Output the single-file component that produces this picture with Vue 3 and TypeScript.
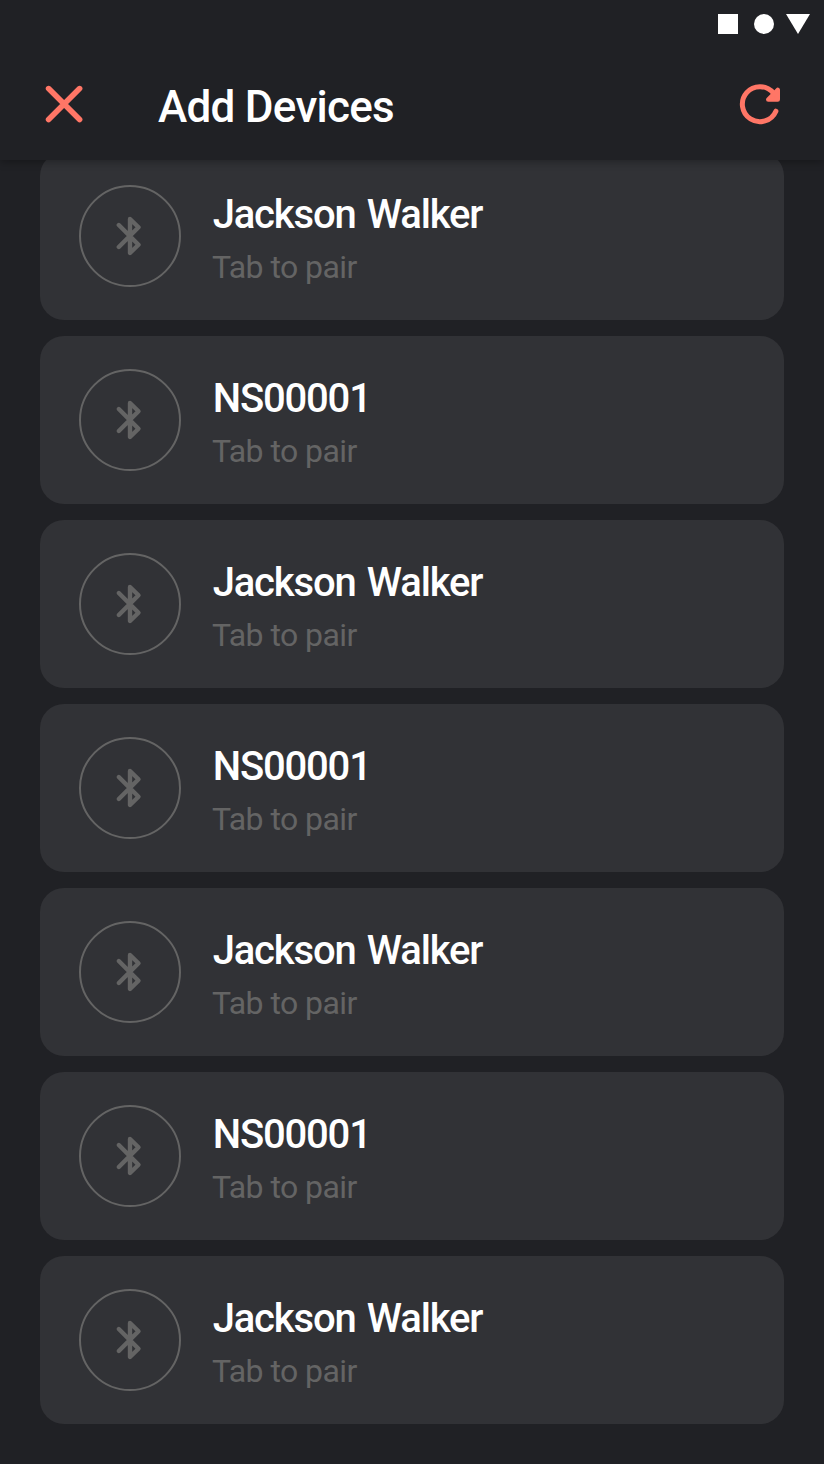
<script setup lang="ts">
interface Device { id: number; name: string; hint: string }
const devices: Device[] = Array.from({ length: 7 }, (_, i) => ({
  id: i,
  name: i % 2 === 0 ? 'Jackson Walker' : 'NS00001',
  hint: 'Tab to pair',
}))
</script>

<template>
  <div class="screen">
    <header class="top">
      <div class="status">
        <svg width="92" height="20" viewBox="0 0 92 20" fill="#fff">
          <rect width="20" height="20" />
          <circle cx="46" cy="10" r="10" />
          <path d="M68 0H92L80 20Z" />
        </svg>
      </div>
      <div class="bar">
        <button class="icon" aria-label="Close">
          <svg width="48" height="48" viewBox="0 0 48 48" fill="none" stroke="#ff7666" stroke-width="5.6" stroke-linecap="round">
            <path d="M8.6 8.6L39.6 39.6M39.6 8.6L8.6 39.6" />
          </svg>
        </button>
        <h1>Add Devices</h1>
        <button class="icon" aria-label="Refresh">
          <svg width="48" height="48" viewBox="0 0 48 48" fill="none" stroke="#ff7666" stroke-width="5" stroke-linecap="round" stroke-linejoin="round">
            <path d="M39.9 31.2A17.5 17.5 0 1 1 37.3 13" />
            <path d="M41.7 10V19.5H32.3Z" fill="#ff7666" stroke-width="4.6" />
          </svg>
        </button>
      </div>
    </header>
    <main class="list">
      <article v-for="d in devices" :key="d.id" class="card">
        <div class="ring">
          <svg width="48" height="48" viewBox="0 0 48 48" fill="none" stroke="#646464" stroke-width="4.4" stroke-linecap="round" stroke-linejoin="round">
            <path d="M12.8 13L32.5 32.7L24 41V7L32.5 15.3L12.8 35" />
          </svg>
        </div>
        <div class="text">
          <div class="name">{{ d.name }}</div>
          <div class="hint">{{ d.hint }}</div>
        </div>
      </article>
    </main>
  </div>
</template>

<style>
body { margin: 0; background: #202125; }
</style>
<style scoped>
.screen { width: 824px; height: 1464px; overflow: hidden; background: #202125; font-family: Roboto, sans-serif; color: #fff; }
.top { position: relative; z-index: 1; height: 160px; background: #202125; box-shadow: 0 2px 8px rgba(0, 0, 0, .3); }
.status { height: 48px; box-sizing: border-box; padding: 14px 14px 0 0; display: flex; justify-content: flex-end; }
.bar { height: 112px; box-sizing: border-box; padding: 0 40px; display: flex; align-items: center; }
.icon { padding: 0; border: 0; background: none; width: 48px; height: 48px; }
svg { display: block; }
h1 { flex: 1; margin: 6px 0 0 70px; font-size: 44px; line-height: 52px; font-weight: 500; letter-spacing: -.72px; }
.list { display: flex; flex-direction: column; gap: 16px; padding: 0 40px; margin-top: -8px; }
.card { height: 168px; border-radius: 24px; background: #313236; display: flex; align-items: center; box-sizing: border-box; padding-left: 39px; }
.ring { width: 102px; height: 102px; box-sizing: border-box; border: 2px solid #646464; border-radius: 50%; display: grid; place-items: center; }
.text { margin: 6px 0 0 31px; white-space: nowrap; }
.name { padding-left: .7px; font-size: 40px; line-height: 48px; font-weight: 500; letter-spacing: -1.18px; word-spacing: 2.6px; }
.hint { font-size: 32px; line-height: 40px; margin-top: 8px; color: #646464; letter-spacing: -.56px; }
</style>
